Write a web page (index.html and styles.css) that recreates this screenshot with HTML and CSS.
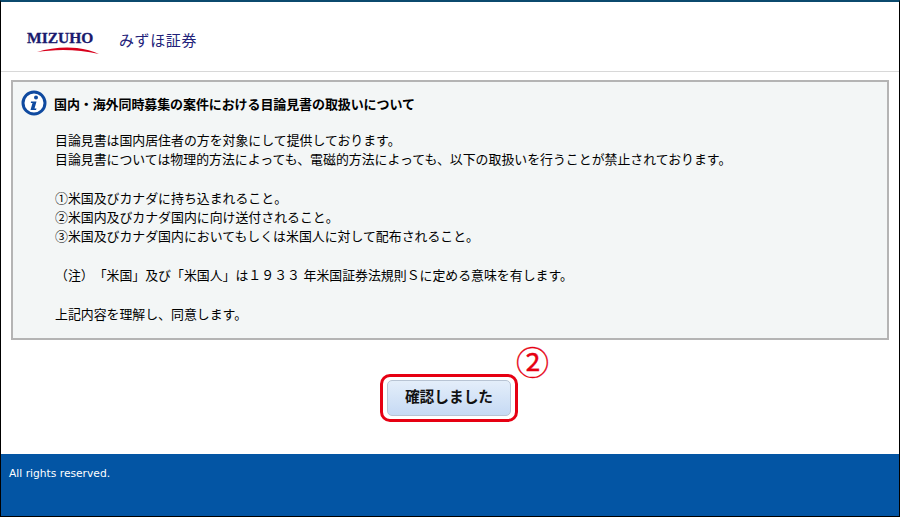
FILE: index.html
```html
<!DOCTYPE html>
<html lang="ja">
<head>
  <meta charset="UTF-8"/>
  <title>みずほ証券</title>
  <link rel="stylesheet" href="styles.css">
</head>
<body>
  <div class="page">
    <header class="header">
      <div class="logo">
        <span class="logo-word">MIZUHO</span>
        <svg class="logo-swoosh" width="74" height="8" viewBox="0 0 74 8">
          <path d="M10 6 C22 2 38 0.500 50 2 C58 3 66 5 72 8 C60 5.500 48 4 36 4 C26 4 17 5 10 6 Z" fill="#d8001c"/>
        </svg>
      </div>
      <span class="brand">みずほ証券</span>
    </header>

    <main class="content">
      <section class="notice">
        <h1 class="notice-title">
          <svg class="info-icon" width="26" height="26" viewBox="0 0 26 26">
            <circle cx="13" cy="13" r="11" fill="#fff" stroke="#0f4aa0" stroke-width="3"/>
            <circle cx="15" cy="7.500" r="2" fill="#0f4aa0"/>
            <path d="M10 11.500 H15.500 L13.500 18.500 H15.500 L15 20 H9.500 L11.500 13 H9.800 Z" fill="#0f4aa0"/>
          </svg>
          国内・海外同時募集の案件における目論見書の取扱いについて
        </h1>
        <div class="notice-body">
          <p>目論見書は国内居住者の方を対象にして提供しております。<br>目論見書については物理的方法によっても、電磁的方法によっても、以下の取扱いを行うことが禁止されております。</p>
          <p>①米国及びカナダに持ち込まれること。<br>②米国内及びカナダ国内に向け送付されること。<br>③米国及びカナダ国内においてもしくは米国人に対して配布されること。</p>
          <p class="note">（注）「米国」及び「米国人」は１９３３ 年米国証券法規則Ｓに定める意味を有します。</p>
          <p>上記内容を理解し、同意します。</p>
        </div>
      </section>

      <div class="actions">
        <div class="btn-wrap">
          <button class="btn-confirm" type="button">確認しました</button>
          <span class="step-mark">②</span>
        </div>
      </div>
    </main>

    <footer class="footer">All rights reserved.</footer>
  </div>
</body>
</html>
```

FILE: styles.css
```css
html, body {
  margin: 0;
  height: 100%;
}

body {
  font-family: "Liberation Sans", "Noto Sans CJK JP", sans-serif;
  font-size: 13px;
  color: #000;
  background-color: #fff;
}

.page {
  box-sizing: border-box;
  height: 517px;
  display: flex;
  flex-direction: column;
  border: 1px solid #000;
  border-top: 2px solid #0b4a6e;
}

.header {
  height: 70px;
  flex: none;
  box-sizing: border-box;
  display: flex;
  align-items: center;
  gap: 22px;
  padding: 11px 0 0 26px;
  border-bottom: 1px solid #d8d8d8;
}

.logo {
  width: 70px;
  display: flex;
  flex-direction: column;
}

.logo-word {
  font-family: "Liberation Serif", serif;
  font-weight: bold;
  font-size: 15.500px;
  line-height: 15px;
  color: #1a1a6e;
  -webkit-text-stroke: 0.300px #1a1a6e;
}

.logo-swoosh {
  display: block;
  margin-top: 1px;
}

.brand {
  font-size: 15px;
  letter-spacing: 0.600px;
  color: #22227a;
  margin-bottom: 6px;
}

.content {
  flex: 1;
  padding: 8px 10px 0;
}

.notice {
  border: 2px solid #b4b4b4;
  background-color: #f3f6f6;
  height: 260px;
  box-sizing: border-box;
  padding: 8px 8px;
}

.notice-title {
  display: flex;
  align-items: center;
  gap: 7px;
  margin: 0;
  font-size: 13px;
  font-weight: bold;
  letter-spacing: -0.100px;
}

.notice-body {
  padding: 15px 0 0 34px;
  font-size: 12.900px;
  line-height: 19.300px;
}

.notice-body p {
  margin: 0 0 19.300px;
}

.note {
  text-spacing-trim: space-all;
}

.actions {
  display: flex;
  justify-content: center;
  padding: 34px 2px 0 0;
}

.btn-wrap {
  position: relative;
  border: 3px solid #e60012;
  border-radius: 10px;
  padding: 3px 4px;
}

.btn-confirm {
  display: block;
  width: 124px;
  height: 36px;
  padding: 0 0 6px;
  border: 1px solid #b8c4d4;
  border-radius: 5px;
  background: linear-gradient(#e4eefa, #c6daf4);
  font-family: inherit;
  font-size: 14.700px;
  font-weight: bold;
  color: #111;
}

.step-mark {
  position: absolute;
  right: -34px;
  top: -33px;
  font-size: 33px;
  line-height: 40px;
  color: #e60012;
  -webkit-text-stroke: 0.300px #e60012;
}

.footer {
  height: 62px;
  flex: none;
  box-sizing: border-box;
  padding: 13px 0 0 8px;
  background-color: #0355a4;
  color: #fff;
  font-family: "DejaVu Sans", sans-serif;
  font-size: 10.700px;
}
```
